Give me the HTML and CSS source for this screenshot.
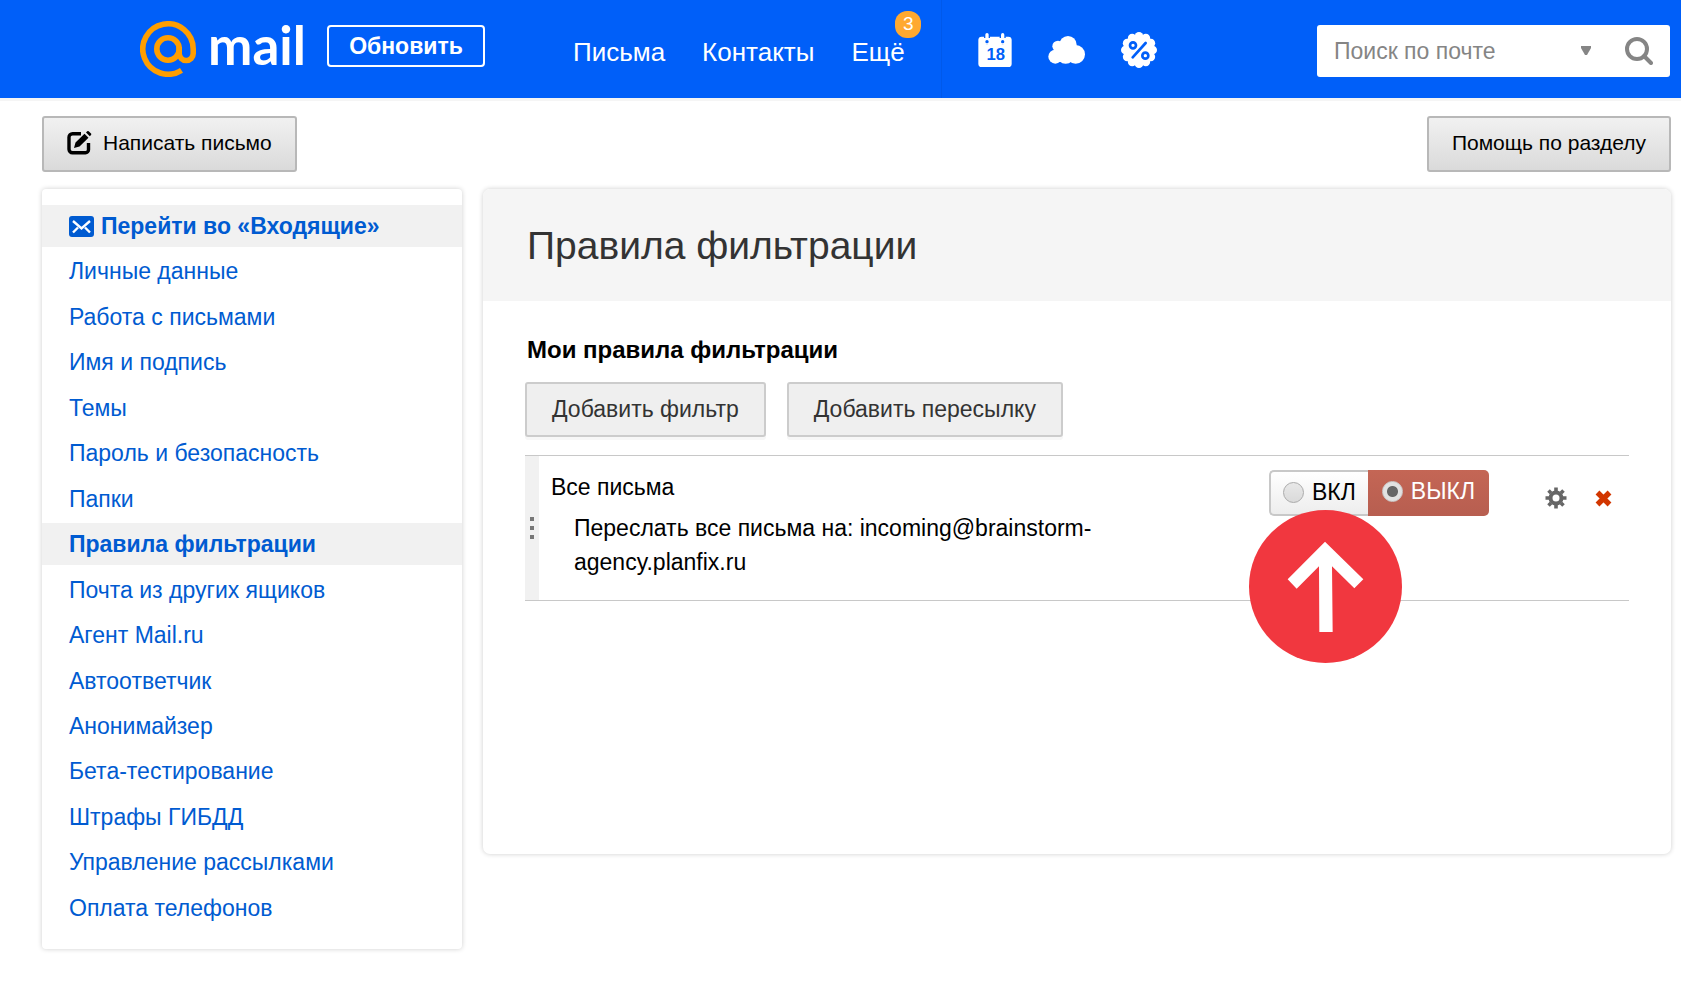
FILE: index.html
```html
<!DOCTYPE html>
<html lang="ru">
<head>
    <meta charset="UTF-8">
    <meta name="viewport" content="width=device-width, initial-scale=1.0">
    <title>Правила фильтрации - Почта Mail.ru</title>
    <link rel="stylesheet" href="styles.css">
</head>
<body>

    <!-- Header Section -->
    <header class="header">
        <a class="logo" href="#">
            <svg class="logo-at" viewBox="0 0 56 56" aria-hidden="true">
                <g fill="none" stroke="#ff9e00" stroke-width="5.6">
                    <circle cx="28" cy="28" r="11.2"/>
                    <path d="M39.2 26v6.5a7 7 0 0 0 14 0V28A25.2 25.2 0 1 0 41.5 49.3"/>
                </g>
            </svg>
            <span class="logo-text">mail</span>
        </a>
        <button class="refresh" type="button">Обновить</button>

        <nav class="nav">
            <a href="#">Письма</a>
            <a href="#">Контакты</a>
            <a class="nav-more" href="#">Ещё<span class="badge">3</span></a>
        </nav>

        <div class="services">
            <a href="#" aria-label="Календарь">
                <svg width="34" height="34" viewBox="109 96 102 102">
                    <rect x="110" y="107" width="100" height="91" rx="10" fill="#fff"/>
                    <rect x="127" y="100" width="18" height="30" rx="9" fill="#005ff9"/>
                    <rect x="174" y="100" width="18" height="30" rx="9" fill="#005ff9"/>
                    <path d="M120 111h32v9h-32zM167 111h32v9h-32z" fill="#fff"/>
                    <rect x="131" y="96" width="10" height="18" rx="5" fill="#fff"/>
                    <rect x="178" y="96" width="10" height="18" rx="5" fill="#fff"/>
                    <path d="M122 116h28v14h-28zM169 116h28v14h-28z" fill="#fff"/>
                    <circle cx="136" cy="122" r="5" fill="#005ff9"/>
                    <circle cx="183" cy="122" r="5" fill="#005ff9"/>
                    <text class="calendar-day" x="162" y="178" text-anchor="middle">18</text>
                </svg>
            </a>
            <a href="#" aria-label="Облако">
                <svg width="37" height="34" viewBox="320 96 111 102">
                    <g fill="#fff">
                        <circle cx="380" cy="131" r="26"/>
                        <circle cx="350" cy="136" r="17"/>
                        <circle cx="342" cy="167" r="21"/>
                        <circle cx="373" cy="162" r="26"/>
                        <circle cx="403" cy="160" r="28"/>
                    </g>
                </svg>
            </a>
            <a href="#" aria-label="Скидки">
                <svg width="36" height="36" viewBox="-54 -54 108 108">
                    <g fill="#fff">
                        <circle r="45"/>
                        <circle cx="0" cy="-41" r="13"/>
                        <circle cx="20.5" cy="-35.5" r="13"/>
                        <circle cx="35.5" cy="-20.5" r="13"/>
                        <circle cx="41" cy="0" r="13"/>
                        <circle cx="35.5" cy="20.5" r="13"/>
                        <circle cx="20.5" cy="35.5" r="13"/>
                        <circle cx="0" cy="41" r="13"/>
                        <circle cx="-20.5" cy="35.5" r="13"/>
                        <circle cx="-35.5" cy="20.5" r="13"/>
                        <circle cx="-41" cy="0" r="13"/>
                        <circle cx="-35.5" cy="-20.5" r="13"/>
                        <circle cx="-20.5" cy="-35.5" r="13"/>
                    </g>
                    <g fill="none" stroke="#005ff9" stroke-width="8" stroke-linecap="round">
                        <circle cx="-18" cy="-14" r="9"/>
                        <circle cx="19" cy="17" r="9"/>
                        <path d="M20-21-19 22"/>
                    </g>
                </svg>
            </a>
        </div>

        <form class="search" role="search">
            <input class="search-input" type="text" placeholder="Поиск по почте" aria-label="Поиск по почте">
            <button class="search-options" type="button" aria-label="Параметры поиска">
                <svg width="10" height="10" viewBox="0 0 10 10"><path d="M0 0h10v2L6 9H4L0 2z" fill="#858585"/></svg>
            </button>
            <button class="search-submit" type="submit" aria-label="Найти">
                <svg width="28" height="28" viewBox="0 0 28 28" fill="none" stroke="#858585" stroke-width="4">
                    <circle cx="12" cy="12" r="10"/>
                    <path d="M19 19l7 7" stroke-linecap="round"/>
                </svg>
            </button>
        </form>
    </header>

    <!-- Toolbar -->
    <div class="toolbar">
        <button class="toolbar-button" type="button">
            <svg width="25" height="24" viewBox="0 0 25 24">
                <path d="M14 2.8H5.5A3.5 3.5 0 0 0 2 6.3v12a3.5 3.5 0 0 0 3.5 3.5h13a3 3 0 0 0 3-3V12" fill="none" stroke="#000" stroke-width="3.4"/>
                <path d="M7 17l1.5-5.5 9-8.7 4 4-9 8.7zM19 1.4L20.200.3q.8-.6 1.5 0L24 2.600q.6.7 0 1.4l-1.200 1.200z"/>
            </svg>
            Написать письмо
        </button>
        <button class="toolbar-button" type="button">Помощь по разделу</button>
    </div>

    <div class="content">

        <!-- Settings Menu -->
        <aside class="sidebar">
            <ul class="menu">
                <li class="active">
                    <a href="#">
                        <svg width="25" height="21" viewBox="0 0 25 21">
                            <rect width="25" height="21" rx="3" fill="#005bd1"/>
                            <path d="M4 5l8.5 7.5L21 5M4 16.5l5-5M21 16.5l-5-5" fill="none" stroke="#fff" stroke-width="2.4"/>
                        </svg>
                        Перейти во «Входящие»
                    </a>
                </li>
                <li><a href="#">Личные данные</a></li>
                <li><a href="#">Работа с письмами</a></li>
                <li><a href="#">Имя и подпись</a></li>
                <li><a href="#">Темы</a></li>
                <li><a href="#">Пароль и безопасность</a></li>
                <li><a href="#">Папки</a></li>
                <li class="active"><a href="#">Правила фильтрации</a></li>
                <li><a href="#">Почта из других ящиков</a></li>
                <li><a href="#">Агент Mail.ru</a></li>
                <li><a href="#">Автоответчик</a></li>
                <li><a href="#">Анонимайзер</a></li>
                <li><a href="#">Бета-тестирование</a></li>
                <li><a href="#">Штрафы ГИБДД</a></li>
                <li><a href="#">Управление рассылками</a></li>
                <li><a href="#">Оплата телефонов</a></li>
            </ul>
        </aside>

        <!-- Filter Rules -->
        <main class="main">
            <h1 class="title">Правила фильтрации</h1>
            <section class="rules">
                <h2>Мои правила фильтрации</h2>
                <div class="actions">
                    <button type="button">Добавить фильтр</button>
                    <button type="button">Добавить пересылку</button>
                </div>

                <div class="rule">
                    <div class="handle"><i></i><i></i><i></i></div>
                    <div class="rule-text">
                        <p>Все письма</p>
                        <p class="rule-action">Переслать все письма на: incoming@brainstorm-<wbr>agency.planfix.ru</p>
                    </div>
                    <div class="switch">
                        <label class="on"><input type="radio" name="state">ВКЛ</label>
                        <label class="off"><input type="radio" name="state" checked>ВЫКЛ</label>
                        <svg class="pointer" viewBox="0 0 459 459" aria-hidden="true">
                            <circle cx="229.5" cy="229.5" r="229.5" fill="#f1373f"/>
                            <path d="M228 95l115 113-27 27-67-66 2 197h-40l-1-197-67 67-27-28z" fill="#fff"/>
                        </svg>
                    </div>
                    <div class="rule-tools">
                        <button type="button" aria-label="Настроить">
                            <svg width="22" height="22" viewBox="-11 -11 22 22" fill="none" stroke="#666">
                                <circle r="5.5" stroke-width="4"/>
                                <path d="M0-10.5V-7M0 7v3.5M-10.5 0H-7M7 0h3.5M-7.5-7.5L-5-5M5 5l2.5 2.5M-7.5 7.5L-5 5M5-5l2.5-2.5" stroke-width="3.6"/>
                            </svg>
                        </button>
                        <button type="button" aria-label="Удалить">
                            <svg width="17" height="17" viewBox="0 0 17 17">
                                <path d="M2.5 2.5l12 12M14.5 2.5l-12 12" stroke="#d23600" stroke-width="5.4"/>
                            </svg>
                        </button>
                    </div>
                </div>
            </section>
        </main>
    </div>

</body>
</html>
```
FILE: styles.css
```css
* {
    box-sizing: border-box;
}

body {
    margin: 0;
    background-color: #fff;
    color: #000;
    font-family: "Liberation Sans", Arial, sans-serif;
    font-size: 23px;
}

button, input {
    font-family: inherit;
    margin: 0;
}

button {
    cursor: pointer;
}

svg {
    display: block;
    flex-shrink: 0;
}

a {
    text-decoration: none;
}

/* Header */
.header {
    display: flex;
    align-items: center;
    height: 98px;
    padding: 0 11px 0 140px;
    background-color: #005ff9;
    box-shadow: 0 3px 0 #f5f5f5;
}

.logo {
    display: flex;
    align-items: center;
    width: 187px;
    gap: 12px;
    color: #fff;
}

.logo-at {
    width: 56px;
    height: 56px;
}

.logo-text {
    font-family: Lato, sans-serif;
    font-size: 53px;
    font-weight: bold;
    line-height: 56px;
    padding-bottom: 8px;
}

.refresh {
    width: 158px;
    height: 42px;
    margin-bottom: 6px;
    padding: 0;
    border: 2px solid #fff;
    border-radius: 4px;
    background: none;
    color: #fff;
    font-size: 23px;
    font-weight: bold;
}

.nav {
    display: flex;
    gap: 37px;
    margin-left: 88px;
    padding-top: 6px;
}

.nav a {
    color: #fff;
    font-size: 26px;
}

.nav-more {
    position: relative;
}

.nav .badge {
    position: absolute;
    left: 44px;
    top: -26px;
    width: 26px;
    height: 27px;
    border-radius: 12px;
    background-color: #ffa930;
    font-size: 19px;
    line-height: 26px;
    text-align: center;
}

.services {
    display: flex;
    align-items: center;
    gap: 36px;
    height: 98px;
    margin-left: 36px;
    padding: 2px 0 0 36px;
    border-left: 1px solid #0059ea;
}

.calendar-day {
    fill: #005ff9;
    font-size: 50px;
    font-weight: bold;
}

.search {
    display: flex;
    align-items: center;
    width: 353px;
    height: 52px;
    margin: 4px 0 0 auto;
    padding: 0 17px;
    border-radius: 3px;
    background-color: #fff;
}

.search-input {
    flex: 1;
    min-width: 0;
    padding: 0;
    border: 0;
    outline: 0;
    font-size: 23px;
}

.search-input::placeholder {
    color: #858585;
}

.search-options, .search-submit {
    padding: 0;
    border: 0;
    background: none;
}

.search-options {
    margin-right: 34px;
}

/* Toolbar */
.toolbar {
    display: flex;
    justify-content: space-between;
    padding: 18px 10px 17px 42px;
}

.toolbar-button {
    display: flex;
    align-items: center;
    gap: 11px;
    height: 56px;
    padding: 0 23px 2px;
    border: 2px solid #b8b8b8;
    border-radius: 3px;
    background: linear-gradient(#f1f1f1, #dadada);
    color: #000;
    font-size: 21px;
}

/* Content */
.content {
    display: flex;
    align-items: flex-start;
    gap: 21px;
    padding: 0 10px 48px 42px;
}

.sidebar, .main {
    background-color: #fff;
    box-shadow: 0 0 5px rgba(0, 0, 0, 0.2);
}

.sidebar {
    display: flex;
    flex-shrink: 0;
    width: 420px;
    min-height: 760px;
    padding: 16px 0 20px;
    border-radius: 4px;
}

.menu {
    display: flex;
    flex: 1;
    flex-direction: column;
    justify-content: space-between;
    margin: 0;
    padding: 0;
    list-style: none;
}

.menu a {
    display: flex;
    align-items: center;
    gap: 7px;
    height: 42px;
    padding: 1px 27px 0;
    color: #005bd1;
}

.menu .active {
    background-color: #f1f1f1;
    font-weight: bold;
}

.main {
    flex: 1;
    min-height: 665px;
    border-radius: 7px;
    overflow: hidden;
}

.title {
    margin: 0;
    padding: 35px 44px 33px;
    background-color: #f5f5f5;
    color: #333;
    font-size: 39px;
    font-weight: normal;
    line-height: 44px;
}

.rules {
    padding: 34px 42px;
}

.rules h2 {
    margin: 0 0 17px 2px;
    font-size: 24px;
    line-height: 30px;
}

.actions {
    display: flex;
    gap: 21px;
    margin-bottom: 18px;
}

.actions button {
    height: 55px;
    padding: 0 25px;
    border: 2px solid #ccc;
    border-radius: 3px;
    background-color: #efefef;
    box-shadow: 0 3px 0 #f7f7f7;
    color: #333;
    font-size: 23px;
}

/* Rule row */
.rule {
    display: flex;
    align-items: flex-start;
    border-top: 1px solid #c8c8c8;
    border-bottom: 1px solid #c8c8c8;
}

.handle {
    display: flex;
    flex-direction: column;
    align-items: center;
    justify-content: center;
    align-self: stretch;
    gap: 5px;
    width: 14px;
    background-color: #f1f1f1;
}

.handle i {
    width: 4px;
    height: 4px;
    background-color: #777;
}

.rule-text {
    width: 600px;
    padding: 14px 12px 21px;
    line-height: 34px;
}

.rule-text p {
    margin: 0;
}

.rule-text .rule-action {
    margin: 7px 0 0 23px;
}

.switch {
    position: relative;
    display: flex;
    height: 46px;
    margin: 14px 0 0 auto;
}

.switch label {
    display: flex;
    align-items: center;
    gap: 8px;
    padding: 0 12px 3px;
    cursor: pointer;
}

.switch .on {
    border: 2px solid #c8c8c8;
    border-right: 0;
    border-radius: 5px 0 0 5px;
    background: linear-gradient(#fff, #ededed);
    padding-bottom: 1px;
}

.switch .off {
    border-radius: 0 5px 5px 0;
    background: linear-gradient(#c46655, #b75e50);
    color: #fff;
    padding: 0 14px 3px;
}

.switch input {
    appearance: none;
    width: 21px;
    height: 21px;
    margin: 0;
    border: 1px solid #aaa;
    border-radius: 50%;
    background: linear-gradient(#e8e8e8, #dadada);
}

.switch input:checked {
    border-color: #ccc;
    background: radial-gradient(circle, #666 5px, #e2e2e2 6px);
}

/* Arrow drawn over the switch */
.pointer {
    position: absolute;
    left: -20px;
    top: 40px;
    width: 153px;
    height: 153px;
}

.rule-tools {
    display: flex;
    align-items: center;
    gap: 28px;
    margin: 31px 17px 0 56px;
}

.rule-tools button {
    padding: 0;
    border: 0;
    background: none;
}
```
